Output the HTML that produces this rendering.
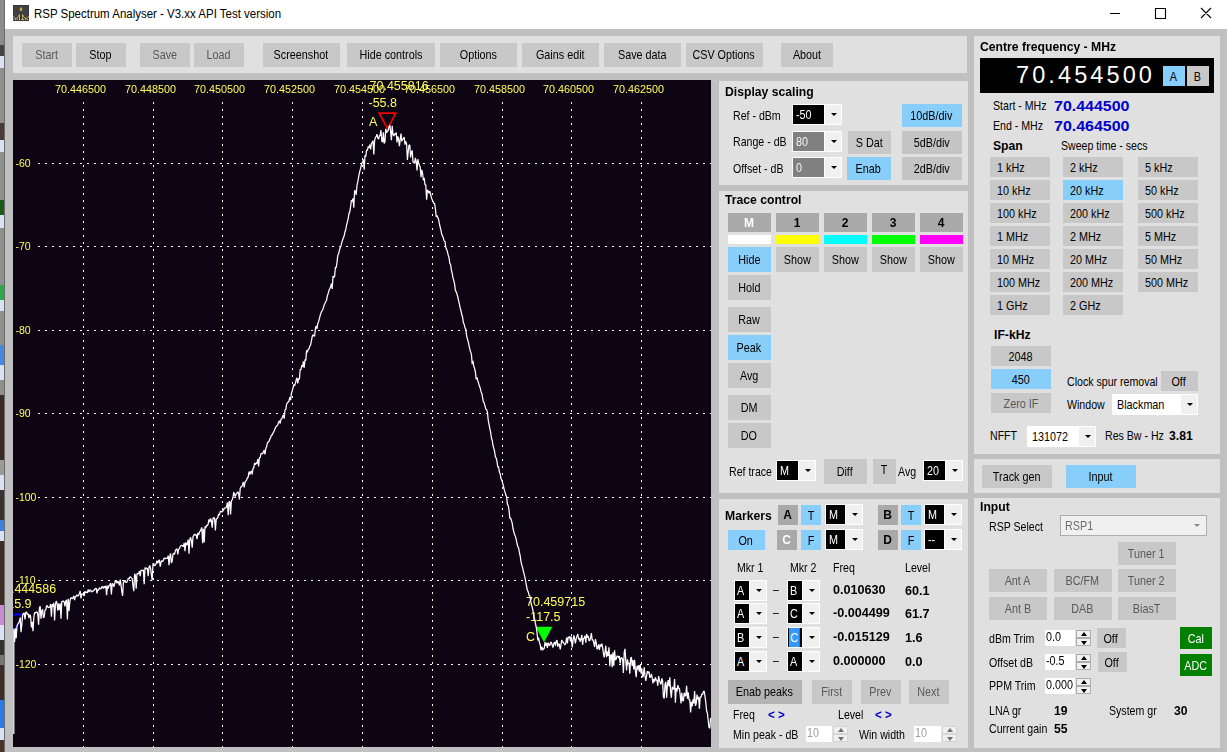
<!DOCTYPE html>
<html><head><meta charset="utf-8"><title>RSP Spectrum Analyser</title>
<style>
html,body{margin:0;padding:0}
body{width:1227px;height:752px;overflow:hidden;background:#c0c0c0;position:relative;font-family:"Liberation Sans",sans-serif;font-size:13px;color:#000}
#w{position:absolute;left:0;top:0;width:1227px;height:752px;opacity:.999}
#tb{position:absolute;left:0;top:0;width:1227px;height:29px;background:#fff}
#ico{position:absolute;left:13px;top:5px}
#wc,#plot{position:absolute}
#ttl{position:absolute;left:33.5px;top:6px;height:17px;line-height:17px;font-size:12.5px;white-space:nowrap;transform-origin:0 50%;transform:scaleX(.918)}
#strip{position:absolute;left:0;top:0;width:5px;height:752px;background:linear-gradient(180deg,#8c8c8c 0px,#8c8c8c 45px,#444 45px,#444 56px,#d8e2f2 56px,#d8e2f2 68px,#8f8f8f 68px,#8f8f8f 123px,#4a3a38 123px,#4a3a38 140px,#d8e2f2 140px,#d8e2f2 152px,#8f8f8f 152px,#8f8f8f 200px,#1c5a1c 200px,#1c5a1c 215px,#d8e2f2 215px,#d8e2f2 228px,#8f8f8f 228px,#8f8f8f 285px,#2aa84a 285px,#2aa84a 300px,#d8e2f2 300px,#d8e2f2 311px,#8f8f8f 311px,#8f8f8f 345px,#4a86e0 345px,#4a86e0 365px,#d8e2f2 365px,#d8e2f2 380px,#8f8f8f 380px,#8f8f8f 395px,#3a2a24 395px,#3a2a24 460px,#9a9a9a 460px,#9a9a9a 475px,#d8e2f2 475px,#d8e2f2 490px,#3a3030 490px,#3a3030 520px,#3a80e0 520px,#3a80e0 531px,#d8e2f2 531px,#d8e2f2 541px,#3e2e28 541px,#3e2e28 605px,#c88ad0 605px,#c88ad0 625px,#d8e2f2 625px,#d8e2f2 640px,#333 640px,#333 655px,#777 655px,#777 665px,#3e2e28 665px,#3e2e28 700px,#2a7ae8 700px,#2a7ae8 728px,#d8e2f2 728px,#d8e2f2 740px,#4a3428 740px,#4a3428 752px);border-right:1px solid #6a6a6a;box-sizing:border-box}
.p{position:absolute;background:#e0e0e0}
.b{position:absolute;background:#c8c8c8;display:flex;align-items:center;justify-content:center;white-space:nowrap;overflow:hidden}
.b.lft{justify-content:flex-start}
.s{display:inline-block;transform:scaleX(.83);line-height:16px;position:relative;left:-.5px}
.sl{transform-origin:0 50%}
.c4{background:#c4c4c4}
.hl{background:#87cefa}
.dk{background:#a9a9a9}
.dk2{background:#b4b4b4}
.grn{background:#008000;color:#fff}
.dis{color:#595959}
.bk{font-weight:bold;font-size:12px;transform:none}
.bw{font-weight:bold;font-size:12px;transform:none;color:#fff}
.up2{position:relative;top:-2px}
.d1{position:relative;top:1px}
.l{position:absolute;height:16px;line-height:16px;white-space:nowrap;transform-origin:0 50%;transform:scaleX(.815)}
.lb{font-weight:bold;font-size:12px;transform:scaleX(1.015);margin-left:-.4px}
.vb{font-weight:bold;font-size:13px;transform:scaleX(.97)}
.big{font-weight:bold;font-size:14px;color:#0000c8;transform:scaleX(1.14)}
.blu{font-weight:bold;font-size:13px;color:#0000c0;transform:scaleX(.9)}
.bar{position:absolute;width:43px;height:9px}
.cb{position:absolute;background:#fff;box-sizing:border-box;border:1px solid #fff}
.cf{position:absolute;left:0;top:0;display:flex;align-items:center;overflow:hidden;white-space:nowrap}
.ca{position:absolute;right:0;top:0;width:16px;background:#f0f0f0}
.ca i{position:absolute;left:5.5px;top:50%;margin-top:-1.5px;border:3px solid transparent;border-top:3.5px solid #000;border-bottom:0;width:0;height:0}
.sel{background:#3399ff;font-weight:normal;padding:2px 2.5px 2px 1.5px}
.sp{position:absolute}
.sf{position:absolute;left:0;top:0;background:#fff;display:flex;align-items:center;overflow:hidden;white-space:nowrap}
.sf .s{position:relative;top:-1.5px}
.su,.sd{position:absolute;right:0;width:15px;background:#f0f0f0;border:1px solid #acacac;box-sizing:border-box}
.su{top:0}
.su i,.sd i{position:absolute;left:3.5px;top:50%;width:0;height:0;border:3px solid transparent}
.su i{margin-top:-2.5px;border-top:0;border-bottom:4px solid #000}
.sd i{margin-top:-1.5px;border-bottom:0;border-top:4px solid #000}
#fq{position:absolute;left:980px;top:58px;width:234px;height:35px;background:#000}
#fqt{position:absolute;left:36px;top:3px;line-height:29px;height:29px;font-size:23.5px;color:#fff;letter-spacing:3.1px;white-space:nowrap}
#rsp{position:absolute;left:1060px;top:515px;width:147px;height:21px;box-sizing:border-box;border:1px solid #adadad;background:#f0f0f0;color:#6d6d6d;display:flex;align-items:center}
#rsp i{position:absolute;right:6px;top:8px;width:0;height:0;border:3px solid transparent;border-top:3.5px solid #888;border-bottom:0}
.ax text{font-size:10.8px;fill:#ffff5a}
.ax text.ay{font-size:10.5px}
.sdis .su,.sdis .sd{border-color:#d6d6d6}
.sdis .su i{border-bottom-color:#707070}
.sdis .sd i{border-top-color:#707070}
.mk text{font-size:12.5px;fill:#ffff5a}
</style></head>
<body><div id="w">
<div id="tb"></div>
<svg id="ico" width="16" height="16" viewBox="0 0 16 16"><rect x=".5" y=".5" width="15" height="15" fill="#414141" stroke="#363636"/><rect x="6.8" y="2.6" width="2.4" height="3.4" rx=".8" fill="#c9a73a"/><rect x="6" y="7.6" width="4" height="1" fill="#343a4a"/><rect x="7" y="9.5" width="2" height="5.5" fill="#343434"/><path d="M0 11.5L3 14L5.5 11.5L6.5 9.5V15M9.5 15V9.5L10.5 11.5L13 14L16 11.5" stroke="#d8c060" fill="none" stroke-width=".9"/><path d="M0 14.6H16" stroke="#e8dc90" stroke-width=".8" stroke-dasharray="1 1"/></svg>
<span id="ttl">RSP Spectrum Analyser - V3.xx API Test version</span>
<svg id="wc" width="120" height="29" viewBox="0 0 120 29" style="left:1100px;top:0"><path d="M10 13.5h10M55.5 8.5h10v10h-10zM101 8l10 10M111 8l-10 10" stroke="#000" stroke-width="1.1" fill="none"/></svg>
<div id="strip"></div>
<div class="p" style="left:13px;top:36px;width:954px;height:37px"></div>
<div class="b dis" style="left:22px;top:43px;width:50px;height:24px"><span class="s ">Start</span></div>
<div class="b " style="left:76px;top:43px;width:50px;height:24px"><span class="s ">Stop</span></div>
<div class="b dis" style="left:140px;top:43px;width:50px;height:24px"><span class="s ">Save</span></div>
<div class="b dis" style="left:194px;top:43px;width:50px;height:24px"><span class="s ">Load</span></div>
<div class="b " style="left:263px;top:43px;width:77px;height:24px"><span class="s ">Screenshot</span></div>
<div class="b " style="left:347px;top:43px;width:88px;height:24px"><span class="s ">Hide controls</span></div>
<div class="b " style="left:440px;top:43px;width:77px;height:24px"><span class="s ">Options</span></div>
<div class="b " style="left:522px;top:43px;width:77px;height:24px"><span class="s ">Gains edit</span></div>
<div class="b " style="left:604px;top:43px;width:77px;height:24px"><span class="s ">Save data</span></div>
<div class="b " style="left:686px;top:43px;width:77px;height:24px"><span class="s ">CSV Options</span></div>
<div class="b " style="left:781px;top:43px;width:52px;height:24px"><span class="s ">About</span></div>
<div class="p" style="left:719px;top:81px;width:249px;height:104px"></div>
<span class="l lb" style="left:725.5px;top:84px;">Display scaling</span>
<span class="l " style="left:732.5px;top:108px;">Ref - dBm</span>
<span class="l " style="left:732.5px;top:134px;">Range - dB</span>
<span class="l " style="left:732.5px;top:160.5px;">Offset - dB</span>
<div class="cb " style="left:792px;top:104px;width:50px;height:21px"><div class="cf" style="background:#000;color:#fff;width:31px;height:19px"><span class="s sl" style="margin-left:3px">-50</span></div><div class="ca" style="height:19px"><i></i></div></div>
<div class="cb " style="left:792px;top:131px;width:50px;height:21px"><div class="cf" style="background:#808080;color:#f4f4f4;width:31px;height:19px"><span class="s sl" style="margin-left:3px">80</span></div><div class="ca" style="height:19px"><i></i></div></div>
<div class="cb " style="left:792px;top:157px;width:50px;height:21px"><div class="cf" style="background:#808080;color:#f4f4f4;width:31px;height:19px"><span class="s sl" style="margin-left:3px">0</span></div><div class="ca" style="height:19px"><i></i></div></div>
<div class="b hl" style="left:902px;top:104px;width:60px;height:23px"><span class="s ">10dB/div</span></div>
<div class="b c4" style="left:902px;top:131px;width:60px;height:23px"><span class="s ">5dB/div</span></div>
<div class="b c4" style="left:902px;top:157px;width:60px;height:23px"><span class="s ">2dB/div</span></div>
<div class="b " style="left:848px;top:131px;width:43px;height:23px"><span class="s ">S Dat</span></div>
<div class="b hl" style="left:847px;top:157px;width:44px;height:23px"><span class="s ">Enab</span></div>
<div class="p" style="left:719px;top:191px;width:249px;height:302px"></div>
<span class="l lb" style="left:725.5px;top:192px;">Trace control</span>
<div class="b dk" style="left:728px;top:213px;width:43px;height:19px"><span class="s bw">M</span></div>
<div class="b dk" style="left:776px;top:213px;width:43px;height:19px"><span class="s bk">1</span></div>
<div class="b dk" style="left:824px;top:213px;width:43px;height:19px"><span class="s bk">2</span></div>
<div class="b dk" style="left:872px;top:213px;width:43px;height:19px"><span class="s bk">3</span></div>
<div class="b dk" style="left:920px;top:213px;width:43px;height:19px"><span class="s bk">4</span></div>
<div class="bar" style="left:728px;top:235px;background:#fff"></div>
<div class="bar" style="left:776px;top:235px;background:#ff0"></div>
<div class="bar" style="left:824px;top:235px;background:#0ff"></div>
<div class="bar" style="left:872px;top:235px;background:#0f0"></div>
<div class="bar" style="left:920px;top:235px;background:#f0f"></div>
<div class="b hl" style="left:728px;top:247px;width:43px;height:25px"><span class="s ">Hide</span></div>
<div class="b " style="left:776px;top:247px;width:43px;height:25px"><span class="s ">Show</span></div>
<div class="b " style="left:824px;top:247px;width:43px;height:25px"><span class="s ">Show</span></div>
<div class="b " style="left:872px;top:247px;width:43px;height:25px"><span class="s ">Show</span></div>
<div class="b " style="left:920px;top:247px;width:43px;height:25px"><span class="s ">Show</span></div>
<div class="b " style="left:728px;top:275px;width:43px;height:25px"><span class="s ">Hold</span></div>
<div class="b " style="left:728px;top:307px;width:43px;height:25px"><span class="s ">Raw</span></div>
<div class="b hl" style="left:728px;top:335px;width:43px;height:25px"><span class="s ">Peak</span></div>
<div class="b " style="left:728px;top:363px;width:43px;height:25px"><span class="s ">Avg</span></div>
<div class="b " style="left:728px;top:395px;width:43px;height:25px"><span class="s ">DM</span></div>
<div class="b " style="left:728px;top:423px;width:43px;height:25px"><span class="s ">DO</span></div>
<span class="l " style="left:728.5px;top:464px;">Ref trace</span>
<div class="cb " style="left:776px;top:460px;width:40px;height:21px"><div class="cf" style="background:#000;color:#fff;width:21px;height:19px"><span class="s sl" style="margin-left:3px">M</span></div><div class="ca" style="height:19px"><i></i></div></div>
<div class="b " style="left:824px;top:459px;width:43px;height:25px"><span class="s ">Diff</span></div>
<div class="b " style="left:873px;top:459px;width:23px;height:25px"><span class="s up2">T</span></div>
<span class="l " style="left:897.5px;top:464px;">Avg</span>
<div class="cb " style="left:923px;top:460px;width:40px;height:21px"><div class="cf" style="background:#000;color:#fff;width:21px;height:19px"><span class="s sl" style="margin-left:3px">20</span></div><div class="ca" style="height:19px"><i></i></div></div>
<div class="p" style="left:719px;top:499px;width:249px;height:249px"></div>
<span class="l lb" style="left:725.5px;top:507.5px;">Markers</span>
<div class="b dk" style="left:778px;top:505px;width:20px;height:20px"><span class="s bk">A</span></div>
<div class="b hl" style="left:801px;top:505px;width:20px;height:20px"><span class="s  d1">T</span></div>
<div class="cb " style="left:825px;top:504px;width:38px;height:21px"><div class="cf" style="background:#000;color:#fff;width:19px;height:19px"><span class="s sl" style="margin-left:3px">M</span></div><div class="ca" style="height:19px"><i></i></div></div>
<div class="b dk" style="left:878px;top:505px;width:20px;height:20px"><span class="s bk">B</span></div>
<div class="b hl" style="left:901px;top:505px;width:20px;height:20px"><span class="s  d1">T</span></div>
<div class="cb " style="left:924px;top:504px;width:38px;height:21px"><div class="cf" style="background:#000;color:#fff;width:19px;height:19px"><span class="s sl" style="margin-left:3px">M</span></div><div class="ca" style="height:19px"><i></i></div></div>
<div class="b hl" style="left:728px;top:530px;width:37px;height:20px"><span class="s  d1">On</span></div>
<div class="b dk" style="left:777px;top:530px;width:20px;height:20px"><span class="s bw">C</span></div>
<div class="b hl" style="left:801px;top:530px;width:20px;height:20px"><span class="s  d1">F</span></div>
<div class="cb " style="left:825px;top:529px;width:38px;height:21px"><div class="cf" style="background:#000;color:#fff;width:19px;height:19px"><span class="s sl" style="margin-left:3px">M</span></div><div class="ca" style="height:19px"><i></i></div></div>
<div class="b dk" style="left:878px;top:530px;width:20px;height:20px"><span class="s bk">D</span></div>
<div class="b hl" style="left:901px;top:530px;width:20px;height:20px"><span class="s  d1">F</span></div>
<div class="cb " style="left:924px;top:529px;width:38px;height:21px"><div class="cf" style="background:#000;color:#fff;width:19px;height:19px"><span class="s sl" style="margin-left:3px">--</span></div><div class="ca" style="height:19px"><i></i></div></div>
<span class="l " style="left:736.5px;top:560px;">Mkr 1</span>
<span class="l " style="left:790.0px;top:560px;">Mkr 2</span>
<span class="l " style="left:832.5px;top:560px;">Freq</span>
<span class="l " style="left:905.0px;top:560px;">Level</span>
<div class="cb " style="left:734px;top:580px;width:33px;height:21px"><div class="cf" style="background:#000;color:#fff;width:14px;height:19px"><span class="s sl" style="margin-left:2px">A</span></div><div class="ca" style="height:19px"><i></i></div></div>
<span class="l " style="left:772.5px;top:582px;">&ndash;</span>
<div class="cb " style="left:787px;top:580px;width:33px;height:21px"><div class="cf" style="background:#000;color:#fff;width:14px;height:19px"><span class="s sl" style="margin-left:2px">B</span></div><div class="ca" style="height:19px"><i></i></div></div>
<span class="l vb" style="left:832.5px;top:582px;">0.010630</span>
<span class="l vb" style="left:904.5px;top:583px;">60.1</span>
<div class="cb " style="left:734px;top:603px;width:33px;height:21px"><div class="cf" style="background:#000;color:#fff;width:14px;height:19px"><span class="s sl" style="margin-left:2px">A</span></div><div class="ca" style="height:19px"><i></i></div></div>
<span class="l " style="left:772.5px;top:605px;">&ndash;</span>
<div class="cb " style="left:787px;top:603px;width:33px;height:21px"><div class="cf" style="background:#000;color:#fff;width:14px;height:19px"><span class="s sl" style="margin-left:2px">C</span></div><div class="ca" style="height:19px"><i></i></div></div>
<span class="l vb" style="left:832.5px;top:605px;">-0.004499</span>
<span class="l vb" style="left:904.5px;top:606px;">61.7</span>
<div class="cb " style="left:734px;top:627px;width:33px;height:21px"><div class="cf" style="background:#000;color:#fff;width:14px;height:19px"><span class="s sl" style="margin-left:2px">B</span></div><div class="ca" style="height:19px"><i></i></div></div>
<span class="l " style="left:772.5px;top:629px;">&ndash;</span>
<div class="cb " style="left:787px;top:627px;width:33px;height:21px"><div class="cf" style="background:#000;color:#fff;width:14px;height:19px"><span class="s sl" style="margin-left:1px"><b class="sel">C</b></span></div><div class="ca" style="height:19px"><i></i></div></div>
<span class="l vb" style="left:832.5px;top:629px;">-0.015129</span>
<span class="l vb" style="left:904.5px;top:630px;">1.6</span>
<div class="cb " style="left:734px;top:651px;width:33px;height:21px"><div class="cf" style="background:#000;color:#fff;width:14px;height:19px"><span class="s sl" style="margin-left:2px">A</span></div><div class="ca" style="height:19px"><i></i></div></div>
<span class="l " style="left:772.5px;top:653px;">&ndash;</span>
<div class="cb " style="left:787px;top:651px;width:33px;height:21px"><div class="cf" style="background:#000;color:#fff;width:14px;height:19px"><span class="s sl" style="margin-left:2px">A</span></div><div class="ca" style="height:19px"><i></i></div></div>
<span class="l vb" style="left:832.5px;top:653px;">0.000000</span>
<span class="l vb" style="left:904.5px;top:654px;">0.0</span>
<div class="b dk2" style="left:728px;top:680px;width:74px;height:24px"><span class="s ">Enab peaks</span></div>
<div class="b dis" style="left:812px;top:680px;width:40px;height:24px"><span class="s ">First</span></div>
<div class="b dis" style="left:861px;top:680px;width:40px;height:24px"><span class="s ">Prev</span></div>
<div class="b dis" style="left:909px;top:680px;width:40px;height:24px"><span class="s ">Next</span></div>
<span class="l " style="left:733.0px;top:707px;">Freq</span>
<span class="l blu" style="left:767.5px;top:707px;">&lt; &gt;</span>
<span class="l " style="left:838.0px;top:707px;">Level</span>
<span class="l blu" style="left:875.0px;top:707px;">&lt; &gt;</span>
<span class="l " style="left:733.0px;top:726.5px;">Min peak - dB</span>
<div class="sp sdis" style="left:806px;top:726px;width:42px;height:16px"><div class="sf" style="width:26px;height:16px;color:#a0a0a0"><span class="s sl" style="margin-left:1px">10</span></div><div class="su" style="height:8px"><i></i></div><div class="sd" style="top:8px;height:8px"><i></i></div></div>
<span class="l " style="left:858.5px;top:726.5px;">Win width</span>
<div class="sp sdis" style="left:914px;top:726px;width:43px;height:16px"><div class="sf" style="width:27px;height:16px;color:#a0a0a0"><span class="s sl" style="margin-left:1px">10</span></div><div class="su" style="height:8px"><i></i></div><div class="sd" style="top:8px;height:8px"><i></i></div></div>
<div class="p" style="left:974px;top:36px;width:246px;height:418px"></div>
<span class="l lb" style="left:980.0px;top:39px;">Centre frequency - MHz</span>
<div id="fq"><span id="fqt">70.454500</span></div>
<div class="b hl" style="left:1163px;top:66px;width:22px;height:20px"><span class="s  d1">A</span></div>
<div class="b " style="left:1187px;top:66px;width:22px;height:20px"><span class="s  d1">B</span></div>
<span class="l " style="left:993.0px;top:98px;">Start - MHz</span>
<span class="l " style="left:993.0px;top:117.5px;">End - MHz</span>
<span class="l big" style="left:1053.5px;top:98px;">70.444500</span>
<span class="l big" style="left:1053.5px;top:117.8px;">70.464500</span>
<span class="l lb" style="left:993.0px;top:138px;">Span</span>
<span class="l " style="left:1061.0px;top:138px;">Sweep time - secs</span>
<div class="b lft " style="left:990px;top:157px;width:60px;height:20px"><span class="s sl d1" style="margin-left:7px">1 kHz</span></div>
<div class="b lft " style="left:1063px;top:157px;width:60px;height:20px"><span class="s sl d1" style="margin-left:7px">2 kHz</span></div>
<div class="b lft " style="left:1138px;top:157px;width:60px;height:20px"><span class="s sl d1" style="margin-left:7px">5 kHz</span></div>
<div class="b lft " style="left:990px;top:180px;width:60px;height:20px"><span class="s sl d1" style="margin-left:7px">10 kHz</span></div>
<div class="b lft hl" style="left:1063px;top:180px;width:60px;height:20px"><span class="s sl d1" style="margin-left:7px">20 kHz</span></div>
<div class="b lft " style="left:1138px;top:180px;width:60px;height:20px"><span class="s sl d1" style="margin-left:7px">50 kHz</span></div>
<div class="b lft " style="left:990px;top:203px;width:60px;height:20px"><span class="s sl d1" style="margin-left:7px">100 kHz</span></div>
<div class="b lft " style="left:1063px;top:203px;width:60px;height:20px"><span class="s sl d1" style="margin-left:7px">200 kHz</span></div>
<div class="b lft " style="left:1138px;top:203px;width:60px;height:20px"><span class="s sl d1" style="margin-left:7px">500 kHz</span></div>
<div class="b lft " style="left:990px;top:226px;width:60px;height:20px"><span class="s sl d1" style="margin-left:7px">1 MHz</span></div>
<div class="b lft " style="left:1063px;top:226px;width:60px;height:20px"><span class="s sl d1" style="margin-left:7px">2 MHz</span></div>
<div class="b lft " style="left:1138px;top:226px;width:60px;height:20px"><span class="s sl d1" style="margin-left:7px">5 MHz</span></div>
<div class="b lft " style="left:990px;top:249px;width:60px;height:20px"><span class="s sl d1" style="margin-left:7px">10 MHz</span></div>
<div class="b lft " style="left:1063px;top:249px;width:60px;height:20px"><span class="s sl d1" style="margin-left:7px">20 MHz</span></div>
<div class="b lft " style="left:1138px;top:249px;width:60px;height:20px"><span class="s sl d1" style="margin-left:7px">50 MHz</span></div>
<div class="b lft " style="left:990px;top:272px;width:60px;height:20px"><span class="s sl d1" style="margin-left:7px">100 MHz</span></div>
<div class="b lft " style="left:1063px;top:272px;width:60px;height:20px"><span class="s sl d1" style="margin-left:7px">200 MHz</span></div>
<div class="b lft " style="left:1138px;top:272px;width:60px;height:20px"><span class="s sl d1" style="margin-left:7px">500 MHz</span></div>
<div class="b lft " style="left:990px;top:295px;width:60px;height:20px"><span class="s sl d1" style="margin-left:7px">1 GHz</span></div>
<div class="b lft " style="left:1063px;top:295px;width:60px;height:20px"><span class="s sl d1" style="margin-left:7px">2 GHz</span></div>
<span class="l lb" style="left:994.0px;top:326.5px;">IF-kHz</span>
<div class="b " style="left:991px;top:346px;width:60px;height:20px"><span class="s  d1">2048</span></div>
<div class="b hl" style="left:991px;top:369px;width:60px;height:20px"><span class="s  d1">450</span></div>
<div class="b dis" style="left:991px;top:393px;width:60px;height:20px"><span class="s  d1">Zero IF</span></div>
<span class="l " style="left:1067.0px;top:373.5px;">Clock spur removal</span>
<div class="b " style="left:1161px;top:371px;width:37px;height:20px"><span class="s  d1">Off</span></div>
<span class="l " style="left:1067.0px;top:396.5px;">Window</span>
<div class="cb " style="left:1112px;top:394px;width:86px;height:21px"><div class="cf" style="background:#fff;color:#000;width:67px;height:19px"><span class="s sl" style="margin-left:4px">Blackman</span></div><div class="ca" style="height:19px"><i></i></div></div>
<span class="l " style="left:990.0px;top:428px;">NFFT</span>
<div class="cb " style="left:1027px;top:426px;width:69px;height:21px"><div class="cf" style="background:#fff;color:#000;width:50px;height:19px"><span class="s sl" style="margin-left:4px">131072</span></div><div class="ca" style="height:19px"><i></i></div></div>
<span class="l " style="left:1105.0px;top:428px;">Res Bw - Hz</span>
<span class="l lb" style="left:1169.0px;top:428px;">3.81</span>
<div class="p" style="left:974px;top:459px;width:246px;height:34px"></div>
<div class="b " style="left:982px;top:465px;width:70px;height:23px"><span class="s ">Track gen</span></div>
<div class="b hl" style="left:1066px;top:465px;width:70px;height:23px"><span class="s ">Input</span></div>
<div class="p" style="left:974px;top:498px;width:246px;height:250px"></div>
<span class="l lb" style="left:980.0px;top:499px;">Input</span>
<span class="l " style="left:989.0px;top:518.5px;">RSP Select</span>
<div id="rsp"><span class="s sl" style="margin-left:4px">RSP1</span><i></i></div>
<div class="b dis" style="left:1118px;top:542px;width:58px;height:23px"><span class="s ">Tuner 1</span></div>
<div class="b dis" style="left:989px;top:569px;width:58px;height:23px"><span class="s ">Ant A</span></div>
<div class="b dis" style="left:1054px;top:569px;width:58px;height:23px"><span class="s ">BC/FM</span></div>
<div class="b dis" style="left:1118px;top:569px;width:58px;height:23px"><span class="s ">Tuner 2</span></div>
<div class="b dis" style="left:989px;top:597px;width:58px;height:23px"><span class="s ">Ant B</span></div>
<div class="b dis" style="left:1054px;top:597px;width:58px;height:23px"><span class="s ">DAB</span></div>
<div class="b dis" style="left:1118px;top:597px;width:58px;height:23px"><span class="s ">BiasT</span></div>
<span class="l " style="left:989.0px;top:631px;">dBm Trim</span>
<div class="sp " style="left:1045px;top:630px;width:46px;height:16px"><div class="sf" style="width:30px;height:16px;color:#000"><span class="s sl" style="margin-left:1px">0.0</span></div><div class="su" style="height:8px"><i></i></div><div class="sd" style="top:8px;height:8px"><i></i></div></div>
<div class="b " style="left:1097px;top:628px;width:29px;height:20px"><span class="s  d1">Off</span></div>
<span class="l " style="left:989.0px;top:655px;">Offset dB</span>
<div class="sp " style="left:1045px;top:654px;width:46px;height:16px"><div class="sf" style="width:30px;height:16px;color:#000"><span class="s sl" style="margin-left:1px">-0.5</span></div><div class="su" style="height:8px"><i></i></div><div class="sd" style="top:8px;height:8px"><i></i></div></div>
<div class="b " style="left:1098px;top:652px;width:29px;height:20px"><span class="s  d1">Off</span></div>
<span class="l " style="left:989.0px;top:678px;">PPM Trim</span>
<div class="sp " style="left:1045px;top:678px;width:46px;height:16px"><div class="sf" style="width:30px;height:16px;color:#000"><span class="s sl" style="margin-left:1px">0.000</span></div><div class="su" style="height:8px"><i></i></div><div class="sd" style="top:8px;height:8px"><i></i></div></div>
<div class="b grn" style="left:1180px;top:627px;width:32px;height:22px"><span class="s d1">Cal</span></div>
<div class="b grn" style="left:1180px;top:654px;width:32px;height:22px"><span class="s d1">ADC</span></div>
<span class="l " style="left:989.0px;top:703px;">LNA gr</span>
<span class="l lb" style="left:1054.0px;top:703px;">19</span>
<span class="l " style="left:1109.0px;top:703px;">System gr</span>
<span class="l lb" style="left:1174.0px;top:703px;">30</span>
<span class="l " style="left:989.0px;top:721px;">Current gain</span>
<span class="l lb" style="left:1054.0px;top:721px;">55</span>
<svg id="plot" width="698" height="667" viewBox="0 0 698 667" style="left:13px;top:80px">
<rect width="698" height="667" fill="#0d0414"/>
<path d="M70.5 22V667M140.5 22V667M209.5 22V667M279.5 22V667M349.5 22V667M419.5 22V667M489.5 22V667M558.5 22V667M628.5 22V667" stroke="#fff" stroke-width="1" stroke-dasharray="2 5" fill="none"/>
<path d="M25 83.5H698M25 166.5H698M25 250.5H698M25 333.5H698M25 417.5H698M25 500.5H698M25 584.5H698" stroke="#fff" stroke-width="1" stroke-dasharray="2 5" fill="none"/>
<g class="ax">
<text x="67.5" y="13" text-anchor="middle">70.446500</text>
<text x="137.5" y="13" text-anchor="middle">70.448500</text>
<text x="206.5" y="13" text-anchor="middle">70.450500</text>
<text x="276.5" y="13" text-anchor="middle">70.452500</text>
<text x="346.5" y="13" text-anchor="middle">70.454500</text>
<text x="416.5" y="13" text-anchor="middle">70.456500</text>
<text x="486.5" y="13" text-anchor="middle">70.458500</text>
<text x="555.5" y="13" text-anchor="middle">70.460500</text>
<text x="625.5" y="13" text-anchor="middle">70.462500</text>
<text x="2.4" y="86.5" class="ay">-60</text>
<text x="2.4" y="169.5" class="ay">-70</text>
<text x="2.4" y="253.5" class="ay">-80</text>
<text x="2.4" y="336.5" class="ay">-90</text>
<text x="2.4" y="420.5" class="ay">-100</text>
<text x="2.4" y="503.5" class="ay">-110</text>
<text x="2.4" y="587.5" class="ay">-120</text>
</g>
<g class="mk">
<text x="356.5" y="10">70.455816</text><text x="355.5" y="26.5">-55.8</text><text x="356" y="45.5">A</text>
<path d="M366.3 33.2H382.7L374.5 48.80000000000001Z" stroke="#f20000" stroke-width="1.7" fill="none"/>
<text x="513" y="525.5">70.459715</text><text x="513" y="541">-117.5</text><text x="513" y="560.5">C</text>
<path d="M522.7 546.8H539.4L531 562.3Z" fill="#0f0"/>
<text x="-16" y="512.5">70.444586</text><text x="-16" y="528">-115.9</text>
<path d="M-8 534.5H10.5L1.5 550.5Z" stroke="#00f" stroke-width="2" fill="none"/>
</g>
<path d="M0.8 654.0 L0.8 549.0 L0.8 548.8 L1.6 562.0 L2.4 548.2 L3.2 558.2 L4.0 546.0 L4.8 544.1 L5.6 543.0 L6.4 541.4 L7.2 537.6 L8.0 552.1 L8.8 545.0 L9.6 535.1 L10.4 533.5 L11.2 532.9 L12.0 539.5 L12.8 532.3 L13.6 532.0 L14.4 534.6 L15.2 533.9 L16.0 538.2 L16.8 534.6 L17.6 536.2 L18.4 547.4 L19.2 541.8 L20.0 551.2 L20.8 537.5 L21.6 532.4 L22.4 533.1 L23.2 532.1 L24.0 531.9 L24.8 534.1 L25.6 544.8 L26.4 527.9 L27.2 526.2 L28.0 538.8 L28.8 530.8 L29.6 529.4 L30.4 537.8 L31.2 536.8 L32.0 530.2 L32.8 530.0 L33.6 525.6 L34.4 526.0 L35.2 527.8 L36.0 527.3 L36.8 527.2 L37.6 524.0 L38.4 536.7 L39.2 524.2 L40.0 526.8 L40.8 522.8 L41.6 540.4 L42.4 525.1 L43.2 521.0 L44.0 523.3 L44.8 530.8 L45.6 523.6 L46.4 530.0 L47.2 523.2 L48.0 538.8 L48.8 521.6 L49.6 521.3 L50.4 521.0 L51.2 521.9 L52.0 526.3 L52.8 521.0 L53.6 520.0 L54.4 539.4 L55.2 518.7 L56.0 531.0 L56.8 522.1 L57.6 518.2 L58.4 517.7 L59.2 518.7 L60.0 517.9 L60.8 515.9 L61.6 520.1 L62.4 516.4 L63.2 516.3 L64.0 514.9 L64.8 516.1 L65.6 515.5 L66.4 513.6 L67.2 511.0 L68.0 518.4 L68.8 513.8 L69.6 514.0 L70.4 514.6 L71.2 515.8 L72.0 511.2 L72.8 513.0 L73.6 511.9 L74.4 512.8 L75.2 509.4 L76.0 512.1 L76.8 510.1 L77.6 510.0 L78.4 512.0 L79.2 511.2 L80.0 511.2 L80.8 510.6 L81.6 509.1 L82.4 508.9 L83.2 508.2 L84.0 513.5 L84.8 509.3 L85.6 510.3 L86.4 507.8 L87.2 508.5 L88.0 509.1 L88.8 506.6 L89.6 506.8 L90.4 508.5 L91.2 506.2 L92.0 508.1 L92.8 505.6 L93.6 515.2 L94.4 505.7 L95.2 508.7 L96.0 505.6 L96.8 505.0 L97.6 503.1 L98.4 514.4 L99.2 503.7 L100.0 503.9 L100.8 506.9 L101.6 504.2 L102.4 500.2 L103.2 501.6 L104.0 503.2 L104.8 501.2 L105.6 502.4 L106.4 505.3 L107.2 499.6 L108.0 504.9 L108.8 511.6 L109.6 516.0 L110.4 501.9 L111.2 501.9 L112.0 500.3 L112.8 502.4 L113.6 502.5 L114.4 500.9 L115.2 498.4 L116.0 498.9 L116.8 497.1 L117.6 496.9 L118.4 497.9 L119.2 498.6 L120.0 506.0 L120.8 511.1 L121.6 493.8 L122.4 495.4 L123.2 508.6 L124.0 493.6 L124.8 494.0 L125.6 493.2 L126.4 491.1 L127.2 496.2 L128.0 490.2 L128.8 490.3 L129.6 490.7 L130.4 490.1 L131.2 504.3 L132.0 487.6 L132.8 489.0 L133.6 488.0 L134.4 488.5 L135.2 496.2 L136.0 487.3 L136.8 485.4 L137.6 488.4 L138.4 494.8 L139.2 500.3 L140.0 483.5 L140.8 483.7 L141.6 485.9 L142.4 484.9 L143.2 483.5 L144.0 480.8 L144.8 483.2 L145.6 481.1 L146.4 479.8 L147.2 486.6 L148.0 482.3 L148.8 480.6 L149.6 481.7 L150.4 480.2 L151.2 477.9 L152.0 478.9 L152.8 478.2 L153.6 478.3 L154.4 478.3 L155.2 475.6 L156.0 485.1 L156.8 476.4 L157.6 473.5 L158.4 483.0 L159.2 481.3 L160.0 474.1 L160.8 473.0 L161.6 474.5 L162.4 470.5 L163.2 469.3 L164.0 468.9 L164.8 474.4 L165.6 469.4 L166.4 468.6 L167.2 466.5 L168.0 465.8 L168.8 465.1 L169.6 466.0 L170.4 466.5 L171.2 463.0 L172.0 471.2 L172.8 462.3 L173.6 465.1 L174.4 463.9 L175.2 459.6 L176.0 473.6 L176.8 459.8 L177.6 457.3 L178.4 460.8 L179.2 467.7 L180.0 456.9 L180.8 455.3 L181.6 454.1 L182.4 455.1 L183.2 454.6 L184.0 459.1 L184.8 453.0 L185.6 455.0 L186.4 452.3 L187.2 451.1 L188.0 449.5 L188.8 447.4 L189.6 463.1 L190.4 448.7 L191.2 462.5 L192.0 446.5 L192.8 448.0 L193.6 445.2 L194.4 445.9 L195.2 443.7 L196.0 439.4 L196.8 442.0 L197.6 438.5 L198.4 440.9 L199.2 447.8 L200.0 438.5 L200.8 437.5 L201.6 438.5 L202.4 450.4 L203.2 439.4 L204.0 438.5 L204.8 437.6 L205.6 434.0 L206.4 435.1 L207.2 431.6 L208.0 431.3 L208.8 432.1 L209.6 430.8 L210.4 430.7 L211.2 428.1 L212.0 428.2 L212.8 428.0 L213.6 426.4 L214.4 422.5 L215.2 435.2 L216.0 421.8 L216.8 421.6 L217.6 434.5 L218.4 420.8 L219.2 419.9 L220.0 417.3 L220.8 412.2 L221.6 414.9 L222.4 416.5 L223.2 414.0 L224.0 413.3 L224.8 411.9 L225.6 413.5 L226.4 419.4 L227.2 408.6 L228.0 406.8 L228.8 406.7 L229.6 404.5 L230.4 402.0 L231.2 407.3 L232.0 402.1 L232.8 401.2 L233.6 400.0 L234.4 397.7 L235.2 397.2 L236.0 391.5 L236.8 394.6 L237.6 392.4 L238.4 390.8 L239.2 394.3 L240.0 388.3 L240.8 387.9 L241.6 382.9 L242.4 384.6 L243.2 383.1 L244.0 383.4 L244.8 379.1 L245.6 386.4 L246.4 377.7 L247.2 377.7 L248.0 373.6 L248.8 373.2 L249.6 373.9 L250.4 372.1 L251.2 370.0 L252.0 374.3 L252.8 368.3 L253.6 366.9 L254.4 362.9 L255.2 362.0 L256.0 361.5 L256.8 358.9 L257.6 357.8 L258.4 355.0 L259.2 355.0 L260.0 353.1 L260.8 351.9 L261.6 349.7 L262.4 347.9 L263.2 346.3 L264.0 345.8 L264.8 344.9 L265.6 342.1 L266.4 340.7 L267.2 343.5 L268.0 339.0 L268.8 338.8 L269.6 336.4 L270.4 334.7 L271.2 338.6 L272.0 330.0 L272.8 329.3 L273.6 324.0 L274.4 322.9 L275.2 322.0 L276.0 321.0 L276.8 317.2 L277.6 320.2 L278.4 313.2 L279.2 311.0 L280.0 308.0 L280.8 304.4 L281.6 305.9 L282.4 303.2 L283.2 300.0 L284.0 297.8 L284.8 303.3 L285.6 298.3 L286.4 299.5 L287.2 289.2 L288.0 289.7 L288.8 285.0 L289.6 287.0 L290.4 281.3 L291.2 287.8 L292.0 279.5 L292.8 280.5 L293.6 270.4 L294.4 272.2 L295.2 269.5 L296.0 268.8 L296.8 266.1 L297.6 265.2 L298.4 261.0 L299.2 256.6 L300.0 254.7 L300.8 256.0 L301.6 256.2 L302.4 248.7 L303.2 245.8 L304.0 248.9 L304.8 243.2 L305.6 241.7 L306.4 238.6 L307.2 235.3 L308.0 233.1 L308.8 231.1 L309.6 230.0 L310.4 227.6 L311.2 224.8 L312.0 223.3 L312.8 221.7 L313.6 220.2 L314.4 215.4 L315.2 213.4 L316.0 210.4 L316.8 208.8 L317.6 206.9 L318.4 203.7 L319.2 208.9 L320.0 196.0 L320.8 197.4 L321.6 196.5 L322.4 187.4 L323.2 187.7 L324.0 182.6 L324.8 175.1 L325.6 174.0 L326.4 170.4 L327.2 167.7 L328.0 165.9 L328.8 162.4 L329.6 160.0 L330.4 157.7 L331.2 155.8 L332.0 151.7 L332.8 149.5 L333.6 144.8 L334.4 142.1 L335.2 138.3 L336.0 133.4 L336.8 131.9 L337.6 126.4 L338.4 120.4 L339.2 121.4 L340.0 118.3 L340.8 127.6 L341.6 110.4 L342.4 111.4 L343.2 114.9 L344.0 105.2 L344.8 101.7 L345.6 97.1 L346.4 92.8 L347.2 89.8 L348.0 86.6 L348.8 83.2 L349.6 82.5 L350.4 79.5 L351.2 89.8 L352.0 75.4 L352.8 76.6 L353.6 70.0 L354.4 70.3 L355.2 66.7 L356.0 67.9 L356.8 64.6 L357.6 69.3 L358.4 63.2 L359.2 62.8 L360.0 60.6 L360.8 74.5 L361.6 60.6 L362.4 57.4 L363.2 56.6 L364.0 54.2 L364.8 58.2 L365.6 59.2 L366.4 55.8 L367.2 55.2 L368.0 50.2 L368.8 61.2 L369.6 62.2 L370.4 52.3 L371.2 63.4 L372.0 61.6 L372.8 48.8 L373.6 52.7 L374.4 51.0 L375.2 50.8 L376.0 46.9 L376.8 45.2 L377.6 51.4 L378.4 60.2 L379.2 45.7 L380.0 54.2 L380.8 56.0 L381.6 53.8 L382.4 54.6 L383.2 52.5 L384.0 62.4 L384.8 56.4 L385.6 58.9 L386.4 66.3 L387.2 59.6 L388.0 53.6 L388.8 61.4 L389.6 59.3 L390.4 58.6 L391.2 57.0 L392.0 64.6 L392.8 61.5 L393.6 64.0 L394.4 80.0 L395.2 71.8 L396.0 65.0 L396.8 65.0 L397.6 77.4 L398.4 72.2 L399.2 70.4 L400.0 81.9 L400.8 82.3 L401.6 83.4 L402.4 77.8 L403.2 81.7 L404.0 90.4 L404.8 79.2 L405.6 83.1 L406.4 85.2 L407.2 87.3 L408.0 97.1 L408.8 89.8 L409.6 93.5 L410.4 100.4 L411.2 97.8 L412.0 104.6 L412.8 105.1 L413.6 119.6 L414.4 109.7 L415.2 111.1 L416.0 113.2 L416.8 111.1 L417.6 114.2 L418.4 117.6 L419.2 119.9 L420.0 121.5 L420.8 123.3 L421.6 123.5 L422.4 128.9 L423.2 136.8 L424.0 135.5 L424.8 137.6 L425.6 139.5 L426.4 143.7 L427.2 147.3 L428.0 150.3 L428.8 154.7 L429.6 156.0 L430.4 158.4 L431.2 161.2 L432.0 161.4 L432.8 167.4 L433.6 169.2 L434.4 171.9 L435.2 175.1 L436.0 177.5 L436.8 183.3 L437.6 184.5 L438.4 190.1 L439.2 193.2 L440.0 198.1 L440.8 200.4 L441.6 204.2 L442.4 210.5 L443.2 211.9 L444.0 214.0 L444.8 217.0 L445.6 220.6 L446.4 224.1 L447.2 228.2 L448.0 230.8 L448.8 234.8 L449.6 237.3 L450.4 242.8 L451.2 244.4 L452.0 247.9 L452.8 249.1 L453.6 255.7 L454.4 259.0 L455.2 261.5 L456.0 265.6 L456.8 269.0 L457.6 271.9 L458.4 274.1 L459.2 284.1 L460.0 280.9 L460.8 286.6 L461.6 288.3 L462.4 292.0 L463.2 299.4 L464.0 297.3 L464.8 300.7 L465.6 303.2 L466.4 306.1 L467.2 307.9 L468.0 311.7 L468.8 313.4 L469.6 317.6 L470.4 321.9 L471.2 322.9 L472.0 325.9 L472.8 329.2 L473.6 329.6 L474.4 331.9 L475.2 340.0 L476.0 344.2 L476.8 348.4 L477.6 352.1 L478.4 358.0 L479.2 360.3 L480.0 365.5 L480.8 368.1 L481.6 371.5 L482.4 376.8 L483.2 378.1 L484.0 381.3 L484.8 387.1 L485.6 386.8 L486.4 392.2 L487.2 393.8 L488.0 398.6 L488.8 400.1 L489.6 402.9 L490.4 406.0 L491.2 409.6 L492.0 412.1 L492.8 415.1 L493.6 416.6 L494.4 424.5 L495.2 425.4 L496.0 430.0 L496.8 438.3 L497.6 438.1 L498.4 440.3 L499.2 443.2 L500.0 448.5 L500.8 451.8 L501.6 454.7 L502.4 456.3 L503.2 459.3 L504.0 463.5 L504.8 466.5 L505.6 467.8 L506.4 472.5 L507.2 476.0 L508.0 481.6 L508.8 485.1 L509.6 487.6 L510.4 491.3 L511.2 494.4 L512.0 497.7 L512.8 502.4 L513.6 506.4 L514.4 510.4 L515.2 511.7 L516.0 515.3 L516.8 515.7 L517.6 520.5 L518.4 524.6 L519.2 527.3 L520.0 530.5 L520.8 536.3 L521.6 539.2 L522.4 543.5 L523.2 546.9 L524.0 552.3 L524.8 560.4 L525.6 557.5 L526.4 562.4 L527.2 564.8 L528.0 570.2 L528.8 566.7 L529.6 570.3 L530.4 568.6 L531.2 568.7 L532.0 562.0 L532.8 565.8 L533.6 562.8 L534.4 567.8 L535.2 562.6 L536.0 565.0 L536.8 565.6 L537.6 562.1 L538.4 562.5 L539.2 565.1 L540.0 567.6 L540.8 563.3 L541.6 562.1 L542.4 565.6 L543.2 561.2 L544.0 560.2 L544.8 566.6 L545.6 563.6 L546.4 564.7 L547.2 569.3 L548.0 564.9 L548.8 559.9 L549.6 562.1 L550.4 562.2 L551.2 563.8 L552.0 564.9 L552.8 562.9 L553.6 557.7 L554.4 563.4 L555.2 556.8 L556.0 558.3 L556.8 556.3 L557.6 561.5 L558.4 556.7 L559.2 567.5 L560.0 560.9 L560.8 555.4 L561.6 558.6 L562.4 563.4 L563.2 558.6 L564.0 555.9 L564.8 554.1 L565.6 559.4 L566.4 558.1 L567.2 561.9 L568.0 559.0 L568.8 554.8 L569.6 564.8 L570.4 558.9 L571.2 558.0 L572.0 555.7 L572.8 562.8 L573.6 554.0 L574.4 557.7 L575.2 555.8 L576.0 560.6 L576.8 560.7 L577.6 557.5 L578.4 553.1 L579.2 560.2 L580.0 559.8 L580.8 563.2 L581.6 567.0 L582.4 559.1 L583.2 562.6 L584.0 569.2 L584.8 568.2 L585.6 564.3 L586.4 569.8 L587.2 564.5 L588.0 566.6 L588.8 563.7 L589.6 567.1 L590.4 573.3 L591.2 577.3 L592.0 572.3 L592.8 565.7 L593.6 577.2 L594.4 571.7 L595.2 575.8 L596.0 567.2 L596.8 586.1 L597.6 575.5 L598.4 574.4 L599.2 587.2 L600.0 572.2 L600.8 585.6 L601.6 570.4 L602.4 580.0 L603.2 579.1 L604.0 576.1 L604.8 576.0 L605.6 578.0 L606.4 576.1 L607.2 583.4 L608.0 577.8 L608.8 577.8 L609.6 578.8 L610.4 593.0 L611.2 572.7 L612.0 568.9 L612.8 581.1 L613.6 590.4 L614.4 579.3 L615.2 583.7 L616.0 582.9 L616.8 593.8 L617.6 578.6 L618.4 577.1 L619.2 585.9 L620.0 580.2 L620.8 589.4 L621.6 579.8 L622.4 590.9 L623.2 597.2 L624.0 585.8 L624.8 589.6 L625.6 585.1 L626.4 591.8 L627.2 584.7 L628.0 593.4 L628.8 588.2 L629.6 597.4 L630.4 595.3 L631.2 587.4 L632.0 595.4 L632.8 601.0 L633.6 595.9 L634.4 591.2 L635.2 593.3 L636.0 591.5 L636.8 597.6 L637.6 597.0 L638.4 594.0 L639.2 597.8 L640.0 603.4 L640.8 599.0 L641.6 601.7 L642.4 597.4 L643.2 600.0 L644.0 600.5 L644.8 605.8 L645.6 596.0 L646.4 600.4 L647.2 602.4 L648.0 604.4 L648.8 598.4 L649.6 601.0 L650.4 616.9 L651.2 618.5 L652.0 604.5 L652.8 601.9 L653.6 617.8 L654.4 605.0 L655.2 600.1 L656.0 606.4 L656.8 597.2 L657.6 611.3 L658.4 617.8 L659.2 606.8 L660.0 609.1 L660.8 609.1 L661.6 599.0 L662.4 622.7 L663.2 608.1 L664.0 611.5 L664.8 605.1 L665.6 608.7 L666.4 608.0 L667.2 614.9 L668.0 623.5 L668.8 612.7 L669.6 620.8 L670.4 620.9 L671.2 612.7 L672.0 616.0 L672.8 615.5 L673.6 605.7 L674.4 618.7 L675.2 612.4 L676.0 619.8 L676.8 619.9 L677.6 632.4 L678.4 621.9 L679.2 626.5 L680.0 619.4 L680.8 623.4 L681.6 611.1 L682.4 625.7 L683.2 623.5 L684.0 614.5 L684.8 619.5 L685.6 616.9 L686.4 628.8 L687.2 616.7 L688.0 617.3 L688.8 614.0 L689.6 614.6 L690.4 611.7 L691.2 611.0 L692.0 616.5 L692.8 622.2 L693.6 630.7 L694.4 633.3 L695.2 640.2 L696.0 647.4 L696.8 648.2 L697.6 638.0" stroke="#fff" stroke-width="1.25" fill="none" stroke-linejoin="bevel"/>
</svg>
</div></body></html>
